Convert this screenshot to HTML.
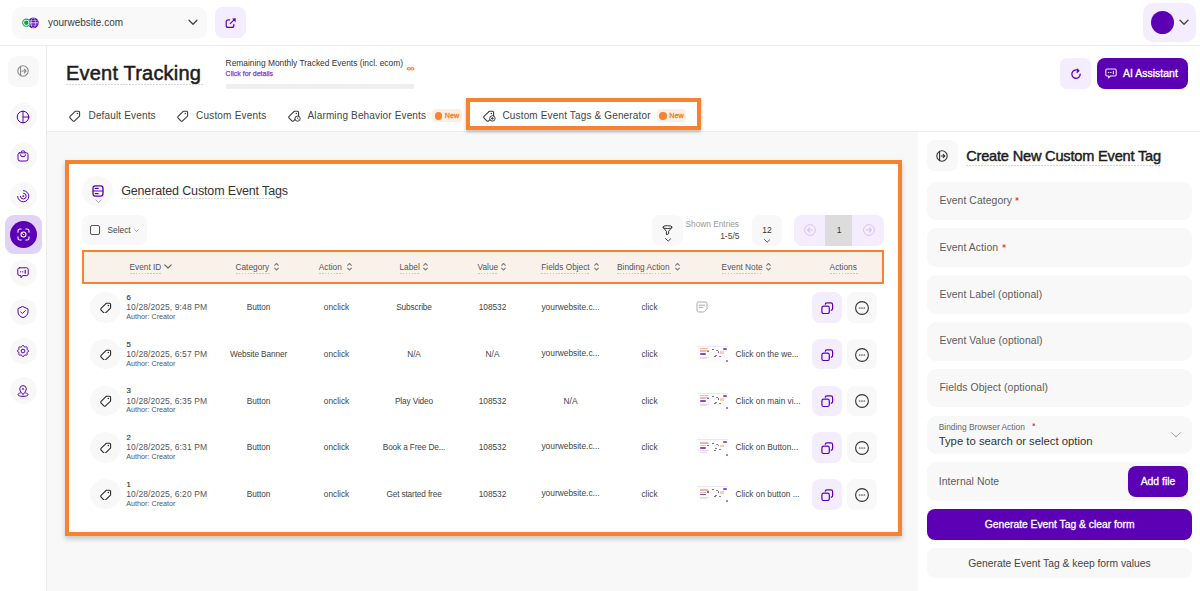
<!DOCTYPE html>
<html><head><meta charset="utf-8">
<style>
*{box-sizing:border-box;margin:0;padding:0}
html,body{width:1200px;height:591px;overflow:hidden}
body{position:relative;background:#fff;font-family:"Liberation Sans", sans-serif;color:#2b2b2b}
.t{position:absolute;white-space:nowrap}
.b{position:absolute}
svg{display:block}
</style></head>
<body>

<div class="b" style="left:0px;top:0px;width:1200px;height:45px;background:#fff;border-radius:0px;"></div>
<div class="b" style="left:0px;top:45px;width:1200px;height:1px;background:#ebebeb;border-radius:0px;"></div>
<div class="b" style="left:46px;top:46px;width:1px;height:545px;background:#ebebeb;border-radius:0px;"></div>
<div class="b" style="left:47px;top:131px;width:1153px;height:1px;background:#ededed;border-radius:0px;"></div>
<div class="b" style="left:47px;top:132px;width:871px;height:459px;background:#f8f8f8;border-radius:0px;"></div>
<div class="b" style="left:918px;top:132px;width:282px;height:459px;background:#fff;border-radius:0px;"></div>
<div class="b" style="left:12px;top:7px;width:195px;height:31.5px;background:#f9f9f9;border-radius:9px;"></div>
<svg class="b" style="left:21px;top:15px;" width="19" height="15" viewBox="0 0 19 15" fill="none"><circle cx="12.3" cy="7.85" r="5.4" fill="#5b00b5"/>
<path d="M8 5.6h8.6M8 10.1h8.6" stroke="#d9c6f5" stroke-width="0.6"/>
<path d="M7.6 7.85h9.4" stroke="#fff" stroke-width="0.9"/>
<ellipse cx="12.3" cy="7.85" rx="2.1" ry="4.9" stroke="#e6d9f8" stroke-width="0.7"/>
<circle cx="5.3" cy="7.7" r="4.3" fill="#fff"/>
<circle cx="5.3" cy="7.7" r="3.6" stroke="#22a65e" stroke-width="1.1"/>
<circle cx="5.3" cy="7.7" r="2.2" fill="#15a050"/></svg>
<div class="t" style="left:48px;top:15.50px;font-size:10px;line-height:14px;color:#3d3d3d;font-weight:400;letter-spacing:0px;">yourwebsite.com</div>
<svg class="b" style="left:188px;top:19px;" width="10" height="7" viewBox="0 0 10 7" fill="none"><path d="M1 1.2l4 4 4-4" stroke="#444" stroke-width="1.3" stroke-linecap="round" stroke-linejoin="round"/></svg>
<div class="b" style="left:215px;top:7px;width:31px;height:31px;background:#f3edfd;border-radius:8px;"></div>
<svg class="b" style="left:224.5px;top:17.5px;" width="11.5" height="10.5" viewBox="0 0 11.5 10.5" fill="none"><path d="M4.6 1.8H3.2A2 2 0 0 0 1.2 3.8v3.6a2 2 0 0 0 2 2h3.6a2 2 0 0 0 2-2V6.4" stroke="#5b00b5" stroke-width="1.2" stroke-linecap="round"/><path d="M5.2 5.6L10 .9" stroke="#5b00b5" stroke-width="1.2" stroke-linecap="round"/><path d="M7 .6h3.6v3.6z" fill="#5b00b5"/></svg>
<div class="b" style="left:1143px;top:3px;width:53px;height:39px;background:#f3edfd;border-radius:10px;"></div>
<div class="b" style="left:1150.5px;top:10.8px;width:23.5px;height:23.5px;background:#5b00b5;border-radius:12px;"></div>
<svg class="b" style="left:1179px;top:19px;" width="10" height="7" viewBox="0 0 10 7" fill="none"><path d="M1 1.2l4 4 4-4" stroke="#444" stroke-width="1.3" stroke-linecap="round" stroke-linejoin="round"/></svg>
<div class="b" style="left:7.5px;top:55.5px;width:31px;height:31.5px;background:#f8f8f8;border-radius:9px;"></div>
<svg class="b" style="left:17px;top:65px;" width="12" height="12" viewBox="0 0 12 12" fill="none"><circle cx="6" cy="6" r="5.2" stroke="#888" stroke-width="1.1"/><path d="M3.6 1.4v9.2M5 6h4M7.3 4.2L9 6 7.3 7.8" stroke="#888" stroke-width="1.1" stroke-linecap="round" stroke-linejoin="round"/></svg>
<div class="b" style="left:10px;top:103.4px;width:26.6px;height:26.6px;background:#f8f8f8;border-radius:14px;"></div>
<svg class="b" style="left:17.3px;top:110.7px;overflow:visible" width="12" height="12" viewBox="0 0 12 12" fill="none"><circle cx="6" cy="6" r="5.8" stroke="#5b00b5" stroke-width="1" stroke-linecap="round" stroke-linejoin="round"/><path d="M6 .2v11.6M6 6h5.8" stroke="#5b00b5" stroke-width="1" stroke-linecap="round" stroke-linejoin="round"/></svg>
<div class="b" style="left:10px;top:143.0px;width:26.6px;height:26.6px;background:#f8f8f8;border-radius:14px;"></div>
<svg class="b" style="left:17.3px;top:150.3px;overflow:visible" width="12" height="12" viewBox="0 0 12 12" fill="none"><path d="M4 2.8V2.4a2 1.6 0 0 1 4 0v.4" stroke="#5b00b5" stroke-width="1" stroke-linecap="round" stroke-linejoin="round"/><path d="M2.6 2.8h6.8a1.6 1.6 0 0 1 1.6 1.6v4.6a2 2 0 0 1-2 2H3a2 2 0 0 1-2-2V4.4a1.6 1.6 0 0 1 1.6-1.6z" stroke="#5b00b5" stroke-width="1" stroke-linecap="round" stroke-linejoin="round"/><path d="M3.4 4.8a2.6 2 0 0 0 5.2 0" stroke="#5b00b5" stroke-width="1" stroke-linecap="round" stroke-linejoin="round"/></svg>
<div class="b" style="left:10px;top:182.29999999999998px;width:26.6px;height:26.6px;background:#f8f8f8;border-radius:14px;"></div>
<svg class="b" style="left:17.3px;top:189.6px;overflow:visible" width="12" height="12" viewBox="0 0 12 12" fill="none"><path d="M6.5 .6a5.6 5.6 0 1 1-5.9 5.9" stroke="#5b00b5" stroke-width="1" stroke-linecap="round" stroke-linejoin="round"/><path d="M6.5 3.2a2.9 2.9 0 1 1-3.1 3.1" stroke="#5b00b5" stroke-width="1" stroke-linecap="round" stroke-linejoin="round"/><circle cx="6.3" cy="6.1" r=".9" fill="#5b00b5"/></svg>
<div class="b" style="left:5px;top:214.5px;width:37px;height:39px;background:#e2d2f6;border-radius:9px;"></div>
<div class="b" style="left:10px;top:220.5px;width:27px;height:27px;background:#5b00b5;border-radius:14px;"></div>
<svg class="b" style="left:17px;top:227.5px;" width="13" height="13" viewBox="0 0 13 13" fill="none"><path d="M1 4.2V2.8A1.8 1.8 0 0 1 2.8 1h1.4M8.8 1h1.4A1.8 1.8 0 0 1 12 2.8v1.4M12 8.8v1.4a1.8 1.8 0 0 1-1.8 1.8H8.8M4.2 12H2.8A1.8 1.8 0 0 1 1 10.2V8.8" stroke="#fff" stroke-width="1.1" stroke-linecap="round"/><circle cx="6.5" cy="6.5" r="2.5" stroke="#fff" stroke-width="1.1"/><path d="M5.6 5.7l1.1 1" stroke="#fff" stroke-width="1" stroke-linecap="round"/></svg>
<div class="b" style="left:10px;top:259.9px;width:26.6px;height:26.6px;background:#f8f8f8;border-radius:14px;"></div>
<svg class="b" style="left:17.3px;top:267.2px;overflow:visible" width="12" height="12" viewBox="0 0 12 12" fill="none"><path d="M2.4 .8h7.2a1.6 1.6 0 0 1 1.6 1.6v4.6a1.6 1.6 0 0 1-1.6 1.6H5.6L4 10.8V8.6H2.4A1.6 1.6 0 0 1 .8 7V2.4A1.6 1.6 0 0 1 2.4.8z" stroke="#5b00b5" stroke-width="1" stroke-linecap="round" stroke-linejoin="round"/><path d="M3.6 4.8h.2M5.6 4.8h.2M8.2 3.4v2.8" stroke="#5b00b5" stroke-width="1.2" stroke-linecap="round"/></svg>
<div class="b" style="left:10px;top:298.7px;width:26.6px;height:26.6px;background:#f8f8f8;border-radius:14px;"></div>
<svg class="b" style="left:17.3px;top:306px;overflow:visible" width="12" height="12" viewBox="0 0 12 12" fill="none"><path d="M6 .6l5 2.4v3c0 2.8-2.2 4.8-5 5.6C3.2 10.8 1 8.8 1 6V3z" stroke="#5b00b5" stroke-width="1" stroke-linecap="round" stroke-linejoin="round"/><path d="M3.8 6l1.6 1.5L8.3 4.7" stroke="#5b00b5" stroke-width="1" stroke-linecap="round" stroke-linejoin="round"/></svg>
<div class="b" style="left:10px;top:337.9px;width:26.6px;height:26.6px;background:#f8f8f8;border-radius:14px;"></div>
<svg class="b" style="left:17.3px;top:345.2px;overflow:visible" width="12" height="12" viewBox="0 0 12 12" fill="none"><g transform="translate(-1.44 -1.44) scale(.62)"><path d="M10.325 4.317c.426-1.756 2.924-1.756 3.35 0a1.724 1.724 0 0 0 2.573 1.066c1.543-.94 3.31.826 2.37 2.37a1.724 1.724 0 0 0 1.065 2.572c1.756.426 1.756 2.924 0 3.35a1.724 1.724 0 0 0-1.066 2.573c.94 1.543-.826 3.31-2.37 2.37a1.724 1.724 0 0 0-2.572 1.065c-.426 1.756-2.924 1.756-3.35 0a1.724 1.724 0 0 0-2.573-1.066c-1.543.94-3.31-.826-2.37-2.37a1.724 1.724 0 0 0-1.065-2.572c-1.756-.426-1.756-2.924 0-3.35a1.724 1.724 0 0 0 1.066-2.573c-.94-1.543.826-3.31 2.37-2.37c1 .608 2.296.07 2.572-1.065z" stroke="#5b00b5" stroke-width="1.6" stroke-linejoin="round"/><circle cx="12" cy="12" r="3" stroke="#5b00b5" stroke-width="1.6"/></g></svg>
<div class="b" style="left:10px;top:377.2px;width:26.6px;height:26.6px;background:#f8f8f8;border-radius:14px;"></div>
<svg class="b" style="left:17.3px;top:384.5px;overflow:visible" width="12" height="12" viewBox="0 0 12 12" fill="none"><path d="M6 9.4S2.7 6.6 2.7 3.9a3.3 3.3 0 0 1 6.6 0C9.3 6.6 6 9.4 6 9.4z" stroke="#5b00b5" stroke-width="1" stroke-linecap="round" stroke-linejoin="round"/><circle cx="6" cy="3.9" r=".9" fill="#5b00b5"/><path d="M3.4 7.9C1.9 8.3.9 8.9.9 9.6c0 1 2.3 1.8 5.1 1.8s5.1-.8 5.1-1.8c0-.7-1-1.3-2.5-1.7" stroke="#5b00b5" stroke-width="1" stroke-linecap="round" stroke-linejoin="round"/></svg>
<div class="t" style="left:66px;top:61.00px;font-size:20px;line-height:24px;color:#1c1c1c;font-weight:400;letter-spacing:0.2px;-webkit-text-stroke:0.5px #1c1c1c;">Event Tracking</div>
<div class="b" style="left:66px;top:84px;width:137px;height:1px;background:repeating-linear-gradient(90deg,#d6d6d6 0 1.6px,transparent 1.6px 3px)"></div>
<div class="t" style="left:225.6px;top:58.00px;font-size:8.4px;line-height:10px;color:#333;font-weight:400;letter-spacing:0px;">Remaining Monthly Tracked Events (incl. ecom)</div>
<div class="t" style="left:225.6px;top:68.50px;font-size:7px;line-height:10px;color:#7d3dd2;font-weight:400;letter-spacing:0px;-webkit-text-stroke:0.25px #7d3dd2;">Click for details</div>
<svg class="b" style="left:406px;top:65.5px;" width="9" height="5.5" viewBox="0 0 9 5.5" fill="none"><ellipse cx="2.85" cy="2.8" rx="1.65" ry="1.2" stroke="#f7822f" stroke-width="1.1"/><ellipse cx="6.35" cy="2.8" rx="1.65" ry="1.2" stroke="#f7822f" stroke-width="1.1"/></svg>
<div class="b" style="left:225.6px;top:84px;width:188.4px;height:5px;background:#efefef;border-radius:0px;"></div>
<svg class="b" style="left:69px;top:110px;" width="12" height="12" viewBox="0 0 12 12" fill="none"><path d="M6.3 1.2h3.1a1.2 1.2 0 0 1 1.2 1.2v3.1a1.2 1.2 0 0 1-.35.85L5.6 10.9a1.2 1.2 0 0 1-1.7 0L1.1 8.1a1.2 1.2 0 0 1 0-1.7l4.55-4.55a1.2 1.2 0 0 1 .65-.65z" stroke="#3a3a3a" stroke-width="1.1" stroke-linejoin="round"/><circle cx="8.3" cy="3.5" r=".75" fill="#3a3a3a"/></svg>
<div class="t" style="left:88.5px;top:108.50px;font-size:10px;line-height:14px;color:#444;font-weight:400;letter-spacing:0.16px;">Default Events</div>
<svg class="b" style="left:177px;top:110px;" width="12" height="12" viewBox="0 0 12 12" fill="none"><path d="M6.3 1.2h3.1a1.2 1.2 0 0 1 1.2 1.2v3.1a1.2 1.2 0 0 1-.35.85L5.6 10.9a1.2 1.2 0 0 1-1.7 0L1.1 8.1a1.2 1.2 0 0 1 0-1.7l4.55-4.55a1.2 1.2 0 0 1 .65-.65z" stroke="#3a3a3a" stroke-width="1.1" stroke-linejoin="round"/><circle cx="8.3" cy="3.5" r=".75" fill="#3a3a3a"/></svg>
<div class="t" style="left:196px;top:108.50px;font-size:10px;line-height:14px;color:#444;font-weight:400;letter-spacing:0.2px;">Custom Events</div>
<svg class="b" style="left:287.5px;top:109.5px;" width="13" height="12" viewBox="0 0 13 12" fill="none"><path d="M6.3 1.2h3.1a1.2 1.2 0 0 1 1.2 1.2v3.1a1.2 1.2 0 0 1-.35.85L5.6 10.9a1.2 1.2 0 0 1-1.7 0L1.1 8.1a1.2 1.2 0 0 1 0-1.7l4.55-4.55a1.2 1.2 0 0 1 .65-.65z" stroke="#3a3a3a" stroke-width="1.1" stroke-linejoin="round"/><circle cx="8.3" cy="3.5" r=".75" fill="#3a3a3a"/><circle cx="9.6" cy="8.6" r="2.6" fill="#fff" stroke="#3a3a3a" stroke-width="1"/><path d="M9.6 7.4v1.3l.8.6" stroke="#3a3a3a" stroke-width=".9"/></svg>
<div class="t" style="left:307.5px;top:108.50px;font-size:10px;line-height:14px;color:#444;font-weight:400;letter-spacing:0.15px;">Alarming Behavior Events</div>
<div class="b" style="left:432px;top:109.2px;width:29.5px;height:13.3px;background:#fdeee4;border-radius:4px;"></div>
<div class="b" style="left:434.7px;top:112.2px;width:7.4px;height:7.4px;background:#f7822f;border-radius:3.7px;"></div>
<div class="t" style="left:444.7px;top:111.00px;font-size:7.2px;line-height:10px;color:#f7822f;font-weight:400;letter-spacing:0px;-webkit-text-stroke:0.35px #f7822f;">New</div>
<div class="b" style="left:466px;top:98px;width:235px;height:32px;border:4px solid #f7822f;box-shadow:0 2px 3px rgba(0,0,0,.25)"></div>
<svg class="b" style="left:482.5px;top:109.5px;" width="13" height="12" viewBox="0 0 13 12" fill="none"><path d="M6.3 1.2h3.1a1.2 1.2 0 0 1 1.2 1.2v3.1a1.2 1.2 0 0 1-.35.85L5.6 10.9a1.2 1.2 0 0 1-1.7 0L1.1 8.1a1.2 1.2 0 0 1 0-1.7l4.55-4.55a1.2 1.2 0 0 1 .65-.65z" stroke="#3a3a3a" stroke-width="1.1" stroke-linejoin="round"/><circle cx="8.3" cy="3.5" r=".75" fill="#3a3a3a"/><circle cx="9.4" cy="8.4" r="2.7" fill="#fff" stroke="#3a3a3a" stroke-width="1"/><path d="M9.4 7v2.8M8 8.4h2.8" stroke="#3a3a3a" stroke-width=".9"/></svg>
<div class="t" style="left:502.5px;top:108.50px;font-size:10px;line-height:14px;color:#444;font-weight:400;letter-spacing:0.15px;">Custom Event Tags &amp; Generator</div>
<div class="b" style="left:656.5px;top:109.2px;width:29.5px;height:13.3px;background:#fdeee4;border-radius:4px;"></div>
<div class="b" style="left:659.2px;top:112.2px;width:7.4px;height:7.4px;background:#f7822f;border-radius:3.7px;"></div>
<div class="t" style="left:669.2px;top:111.00px;font-size:7.2px;line-height:10px;color:#f7822f;font-weight:400;letter-spacing:0px;-webkit-text-stroke:0.35px #f7822f;">New</div>
<div class="b" style="left:1060.3px;top:57.8px;width:30.8px;height:31px;background:#f3edfd;border-radius:7px;"></div>
<svg class="b" style="left:1069.5px;top:67.5px;" width="12" height="12" viewBox="0 0 12 12" fill="none"><path d="M10.2 6.2A4.2 4.2 0 1 1 8.4 2.7" stroke="#5b00b5" stroke-width="1.3" stroke-linecap="round"/><path d="M7.2 1.1l1.6 1.6-1.7 1.5" stroke="#5b00b5" stroke-width="1.3" stroke-linecap="round" stroke-linejoin="round"/></svg>
<div class="b" style="left:1096.5px;top:57.8px;width:91.5px;height:31px;background:#5b00b5;border-radius:8px;"></div>
<svg class="b" style="left:1104.5px;top:67.5px;" width="12" height="11" viewBox="0 0 12 11" fill="none"><path d="M2 1h8a1.2 1.2 0 0 1 1.2 1.2v4.6A1.2 1.2 0 0 1 10 8H5.4L3.6 9.8V8H2A1.2 1.2 0 0 1 .8 6.8V2.2A1.2 1.2 0 0 1 2 1z" stroke="#efe6fb" stroke-width="1.1" stroke-linejoin="round"/><path d="M3.4 4.5h.5M5.6 4.5h.5M8.4 3.2v2.6" stroke="#efe6fb" stroke-width="1.1" stroke-linecap="round"/></svg>
<div class="t" style="left:1123px;top:66.60px;font-size:10.4px;line-height:14px;color:#fff;font-weight:400;letter-spacing:0.05px;-webkit-text-stroke:0.35px #fff;">AI Assistant</div>
<div class="b" style="left:65px;top:160px;width:837px;height:376px;background:#fff;border:4px solid #f7822f;box-shadow:0 3px 5px rgba(0,0,0,.2)"></div>
<div class="b" style="left:82.3px;top:175.5px;width:30.3px;height:30.3px;background:#f8f8f8;border-radius:16px;"></div>
<svg class="b" style="left:92px;top:184.5px;" width="12" height="12" viewBox="0 0 12 12" fill="none"><rect x="1" y=".8" width="10" height="10.4" rx="2.4" stroke="#5b00b5" stroke-width="1.3"/><path d="M1.2 6h9.6M3.2 3.4h3M3.2 8.6h3" stroke="#5b00b5" stroke-width="1.1" stroke-linecap="round"/></svg>
<svg class="b" style="left:94.5px;top:198.5px;" width="7" height="5" viewBox="0 0 7 5" fill="none"><path d="M.8 1l2.7 2.6L6.2 1" stroke="#999" stroke-width=".9" stroke-linecap="round"/></svg>
<div class="t" style="left:121.2px;top:182.50px;font-size:12.5px;line-height:16px;color:#333;font-weight:400;letter-spacing:-0.15px;">Generated Custom Event Tags</div>
<div class="b" style="left:121px;top:198px;width:166px;height:1px;background:repeating-linear-gradient(90deg,#d6d6d6 0 1.6px,transparent 1.6px 3px)"></div>
<div class="b" style="left:82.3px;top:214.6px;width:65px;height:30.6px;background:#f8f8f8;border-radius:8px;"></div>
<div class="b" style="left:90px;top:225px;width:10px;height:10px;border:1.2px solid #555;border-radius:2px"></div>
<div class="t" style="left:107.6px;top:225.60px;font-size:8.2px;line-height:10px;color:#444;font-weight:400;letter-spacing:0.05px;">Select</div>
<svg class="b" style="left:133.5px;top:228.5px;" width="5" height="3" viewBox="0 0 5 3" fill="none"><path d="M.4.4L2.5 2.5 4.6.4" stroke="#777" stroke-width=".7"/></svg>
<div class="b" style="left:652px;top:214.5px;width:31px;height:31px;background:#f8f8f8;border-radius:8px;"></div>
<svg class="b" style="left:662px;top:224.5px;" width="11" height="10.5" viewBox="0 0 11 10.5" fill="none"><ellipse cx="5.5" cy="2.1" rx="4.6" ry="1.45" stroke="#333" stroke-width="1"/><path d="M.9 2.3L4.4 6.3v3.5l2.2-1V6.3l3.5-4" stroke="#333" stroke-width="1" stroke-linejoin="round"/></svg>
<svg class="b" style="left:664.5px;top:238px;" width="6.5" height="4" viewBox="0 0 6.5 4" fill="none"><path d="M.5.5L3.2 3.2 6 .5" stroke="#333" stroke-width=".9" stroke-linecap="round"/></svg>
<div class="t" style="left:685.5px;top:219.00px;font-size:8.3px;line-height:10px;color:#9a9a9a;font-weight:400;letter-spacing:0px;">Shown Entries</div>
<div class="t" style="left:699.50px;width:40px;text-align:right;top:231.00px;font-size:8.5px;line-height:10px;color:#444;font-weight:400;letter-spacing:0px;">1-5/5</div>
<div class="b" style="left:751.5px;top:214.75px;width:30.8px;height:30.9px;background:#f8f8f8;border-radius:8px;"></div>
<div class="t" style="left:757.00px;width:20px;text-align:center;top:224.80px;font-size:8.5px;line-height:10px;color:#333;font-weight:400;letter-spacing:0px;">12</div>
<svg class="b" style="left:763.8px;top:238.5px;" width="6.5" height="4" viewBox="0 0 6.5 4" fill="none"><path d="M.5.5L3.2 3.2 6 .5" stroke="#444" stroke-width=".9" stroke-linecap="round"/></svg>
<div class="b" style="left:794.4px;top:214.75px;width:89.4px;height:30.9px;background:#f3edfd;border-radius:8px;"></div>
<div class="b" style="left:825.4px;top:214.75px;width:27.1px;height:30.9px;background:#dcdcdc;border-radius:0px;"></div>
<div class="t" style="left:829.00px;width:20px;text-align:center;top:224.80px;font-size:8.5px;line-height:10px;color:#333;font-weight:400;letter-spacing:0px;">1</div>
<svg class="b" style="left:803.7px;top:223.6px;" width="12" height="12" viewBox="0 0 12 12" fill="none"><circle cx="6" cy="6" r="5.4" stroke="#d7c2f3" stroke-width="1"/><path d="M8.6 6H3.6M5.6 4L3.6 6l2 2" stroke="#d7c2f3" stroke-width="1.1" stroke-linecap="round" stroke-linejoin="round"/></svg>
<svg class="b" style="left:862.5px;top:223.6px;" width="12" height="12" viewBox="0 0 12 12" fill="none"><circle cx="6" cy="6" r="5.4" stroke="#d7c2f3" stroke-width="1"/><path d="M3.4 6h5M6.4 4l2 2-2 2" stroke="#d7c2f3" stroke-width="1.1" stroke-linecap="round" stroke-linejoin="round"/></svg>
<div class="b" style="left:82px;top:250px;width:802px;height:34px;background:#faf1eb;border:2.5px solid #f7822f"></div>
<div class="t" style="left:129.5px;top:262.00px;font-size:8.3px;line-height:10px;color:#555;font-weight:400;letter-spacing:0px;">Event ID</div>
<div class="b" style="left:129.5px;top:273px;width:31px;height:1px;background:repeating-linear-gradient(90deg,#cdc6c1 0 1.6px,transparent 1.6px 2.9px)"></div>
<svg class="b" style="left:163.5px;top:264px;" width="8" height="5" viewBox="0 0 8 5" fill="none"><path d="M.8.9l3.2 3.1L7.2.9" stroke="#666" stroke-width="1.2" stroke-linecap="round" stroke-linejoin="round"/></svg>
<div class="t" style="left:235.5px;top:262.00px;font-size:8.3px;line-height:10px;color:#555;font-weight:400;letter-spacing:0px;">Category</div>
<div class="b" style="left:235.5px;top:273px;width:34.5px;height:1px;background:repeating-linear-gradient(90deg,#cdc6c1 0 1.6px,transparent 1.6px 2.9px)"></div>
<svg class="b" style="left:273.5px;top:262.3px;" width="5" height="9.5" viewBox="0 0 5 9.5" fill="none"><path d="M.6 3.3L2.5 1.5 4.4 3.3M.6 6.2L2.5 8 4.4 6.2" stroke="#7a7a7a" stroke-width="1.05" stroke-linecap="round" stroke-linejoin="round"/></svg>
<div class="t" style="left:318.75px;top:262.00px;font-size:8.3px;line-height:10px;color:#555;font-weight:400;letter-spacing:0px;">Action</div>
<div class="b" style="left:318.75px;top:273px;width:24.25px;height:1px;background:repeating-linear-gradient(90deg,#cdc6c1 0 1.6px,transparent 1.6px 2.9px)"></div>
<svg class="b" style="left:346.5px;top:262.3px;" width="5" height="9.5" viewBox="0 0 5 9.5" fill="none"><path d="M.6 3.3L2.5 1.5 4.4 3.3M.6 6.2L2.5 8 4.4 6.2" stroke="#7a7a7a" stroke-width="1.05" stroke-linecap="round" stroke-linejoin="round"/></svg>
<div class="t" style="left:399.5px;top:262.00px;font-size:8.3px;line-height:10px;color:#555;font-weight:400;letter-spacing:0px;">Label</div>
<div class="b" style="left:399.5px;top:273px;width:20px;height:1px;background:repeating-linear-gradient(90deg,#cdc6c1 0 1.6px,transparent 1.6px 2.9px)"></div>
<svg class="b" style="left:423.0px;top:262.3px;" width="5" height="9.5" viewBox="0 0 5 9.5" fill="none"><path d="M.6 3.3L2.5 1.5 4.4 3.3M.6 6.2L2.5 8 4.4 6.2" stroke="#7a7a7a" stroke-width="1.05" stroke-linecap="round" stroke-linejoin="round"/></svg>
<div class="t" style="left:477.5px;top:262.00px;font-size:8.3px;line-height:10px;color:#555;font-weight:400;letter-spacing:0px;">Value</div>
<div class="b" style="left:477.5px;top:273px;width:20px;height:1px;background:repeating-linear-gradient(90deg,#cdc6c1 0 1.6px,transparent 1.6px 2.9px)"></div>
<svg class="b" style="left:501.0px;top:262.3px;" width="5" height="9.5" viewBox="0 0 5 9.5" fill="none"><path d="M.6 3.3L2.5 1.5 4.4 3.3M.6 6.2L2.5 8 4.4 6.2" stroke="#7a7a7a" stroke-width="1.05" stroke-linecap="round" stroke-linejoin="round"/></svg>
<div class="t" style="left:541.25px;top:262.00px;font-size:8.3px;line-height:10px;color:#555;font-weight:400;letter-spacing:0px;">Fields Object</div>
<div class="b" style="left:541.25px;top:273px;width:48.75px;height:1px;background:repeating-linear-gradient(90deg,#cdc6c1 0 1.6px,transparent 1.6px 2.9px)"></div>
<svg class="b" style="left:593.5px;top:262.3px;" width="5" height="9.5" viewBox="0 0 5 9.5" fill="none"><path d="M.6 3.3L2.5 1.5 4.4 3.3M.6 6.2L2.5 8 4.4 6.2" stroke="#7a7a7a" stroke-width="1.05" stroke-linecap="round" stroke-linejoin="round"/></svg>
<div class="t" style="left:617px;top:262.00px;font-size:8.3px;line-height:10px;color:#555;font-weight:400;letter-spacing:0px;">Binding Action</div>
<div class="b" style="left:617px;top:273px;width:54.25px;height:1px;background:repeating-linear-gradient(90deg,#cdc6c1 0 1.6px,transparent 1.6px 2.9px)"></div>
<svg class="b" style="left:674.75px;top:262.3px;" width="5" height="9.5" viewBox="0 0 5 9.5" fill="none"><path d="M.6 3.3L2.5 1.5 4.4 3.3M.6 6.2L2.5 8 4.4 6.2" stroke="#7a7a7a" stroke-width="1.05" stroke-linecap="round" stroke-linejoin="round"/></svg>
<div class="t" style="left:721.6px;top:262.00px;font-size:8.3px;line-height:10px;color:#555;font-weight:400;letter-spacing:0px;">Event Note</div>
<div class="b" style="left:721.6px;top:273px;width:40.4px;height:1px;background:repeating-linear-gradient(90deg,#cdc6c1 0 1.6px,transparent 1.6px 2.9px)"></div>
<svg class="b" style="left:765.5px;top:262.3px;" width="5" height="9.5" viewBox="0 0 5 9.5" fill="none"><path d="M.6 3.3L2.5 1.5 4.4 3.3M.6 6.2L2.5 8 4.4 6.2" stroke="#7a7a7a" stroke-width="1.05" stroke-linecap="round" stroke-linejoin="round"/></svg>
<div class="t" style="left:829.6px;top:262.00px;font-size:8.3px;line-height:10px;color:#555;font-weight:400;letter-spacing:0px;">Actions</div>
<div class="b" style="left:829.6px;top:273px;width:28px;height:1px;background:repeating-linear-gradient(90deg,#cdc6c1 0 1.6px,transparent 1.6px 2.9px)"></div>
<div class="b" style="left:90.1px;top:292.0px;width:30.6px;height:30.6px;background:#f8f8f8;border-radius:16px;"></div>
<svg class="b" style="left:99.5px;top:301.8px;" width="12" height="11.5" viewBox="0 0 12 11.5" fill="none"><path d="M6.3 1.2h3.1a1.2 1.2 0 0 1 1.2 1.2v3.1a1.2 1.2 0 0 1-.35.85L5.6 10.9a1.2 1.2 0 0 1-1.7 0L1.1 8.1a1.2 1.2 0 0 1 0-1.7l4.55-4.55a1.2 1.2 0 0 1 .65-.65z" stroke="#2a2a2a" stroke-width="1.1" stroke-linejoin="round"/><circle cx="8.3" cy="3.5" r=".75" fill="#2a2a2a"/></svg>
<div class="t" style="left:126.5px;top:292.90px;font-size:7.8px;line-height:9px;color:#333;font-weight:400;letter-spacing:0px;-webkit-text-stroke:0.15px #333;">6</div>
<div class="t" style="left:126.3px;top:302.00px;font-size:8.5px;line-height:10px;color:#555;font-weight:400;letter-spacing:0.1px;">10/28/2025, 9:48 PM</div>
<div class="t" style="left:126.3px;top:311.90px;font-size:7.2px;line-height:9px;color:#555;font-weight:400;letter-spacing:0px;">Author: Creator</div>
<div class="t" style="left:213.50px;width:90px;text-align:center;top:302.30px;font-size:8.3px;line-height:10px;color:#444;font-weight:400;letter-spacing:-0.12px;">Button</div>
<div class="t" style="left:306.50px;width:60px;text-align:center;top:302.30px;font-size:8.3px;line-height:10px;color:#444;font-weight:400;letter-spacing:0px;">onclick</div>
<div class="t" style="left:369.00px;width:90px;text-align:center;top:302.30px;font-size:8.3px;line-height:10px;color:#444;font-weight:400;letter-spacing:-0.15px;">Subscribe</div>
<div class="t" style="left:462.50px;width:60px;text-align:center;top:302.30px;font-size:8.3px;line-height:10px;color:#444;font-weight:400;letter-spacing:0px;">108532</div>
<div class="t" style="left:530.50px;width:80px;text-align:center;top:302.30px;font-size:8.4px;line-height:10px;color:#444;font-weight:400;letter-spacing:0px;">yourwebsite.c...</div>
<div class="t" style="left:629.50px;width:40px;text-align:center;top:302.30px;font-size:8.3px;line-height:10px;color:#444;font-weight:400;letter-spacing:0px;">click</div>
<svg class="b" style="left:696px;top:300.8px;" width="12" height="13" viewBox="0 0 12 13" fill="none"><path d="M2.6 1h6.8A1.6 1.6 0 0 1 11 2.6v5.2L7.8 11H2.6A1.6 1.6 0 0 1 1 9.4V2.6A1.6 1.6 0 0 1 2.6 1z" stroke="#aaa" stroke-width="1" stroke-linejoin="round"/><path d="M3.4 4.2h5.2M3.4 6.4h3.4" stroke="#aaa" stroke-width="1" stroke-linecap="round"/></svg>
<div class="b" style="left:811.8px;top:292.0px;width:30.6px;height:30.8px;background:#f3edfd;border-radius:8px;"></div>
<svg class="b" style="left:821px;top:301.8px;" width="12.5" height="12.5" viewBox="0 0 12.5 12.5" fill="none"><rect x=".9" y="4.1" width="7.4" height="7.4" rx="1.8" stroke="#5b00b5" stroke-width="1.2"/><path d="M4.2 2.6A1.8 1.8 0 0 1 6 .9h3.8a1.8 1.8 0 0 1 1.8 1.8v3.8a1.8 1.8 0 0 1-1.8 1.8" stroke="#5b00b5" stroke-width="1.2"/></svg>
<div class="b" style="left:846.9px;top:292.0px;width:30.6px;height:30.8px;background:#f8f8f8;border-radius:8px;"></div>
<svg class="b" style="left:855px;top:300.90000000000003px;" width="14" height="14" viewBox="0 0 14 14" fill="none"><circle cx="7" cy="7" r="6.4" stroke="#333" stroke-width="1.1"/><path d="M4.4 7h.6M6.7 7h.6M9 7h.6" stroke="#333" stroke-width="1.2" stroke-linecap="round"/></svg>
<div class="b" style="left:90.1px;top:338.7px;width:30.6px;height:30.6px;background:#f8f8f8;border-radius:16px;"></div>
<svg class="b" style="left:99.5px;top:348.5px;" width="12" height="11.5" viewBox="0 0 12 11.5" fill="none"><path d="M6.3 1.2h3.1a1.2 1.2 0 0 1 1.2 1.2v3.1a1.2 1.2 0 0 1-.35.85L5.6 10.9a1.2 1.2 0 0 1-1.7 0L1.1 8.1a1.2 1.2 0 0 1 0-1.7l4.55-4.55a1.2 1.2 0 0 1 .65-.65z" stroke="#2a2a2a" stroke-width="1.1" stroke-linejoin="round"/><circle cx="8.3" cy="3.5" r=".75" fill="#2a2a2a"/></svg>
<div class="t" style="left:126.5px;top:339.60px;font-size:7.8px;line-height:9px;color:#333;font-weight:400;letter-spacing:0px;-webkit-text-stroke:0.15px #333;">5</div>
<div class="t" style="left:126.3px;top:348.70px;font-size:8.5px;line-height:10px;color:#555;font-weight:400;letter-spacing:0.1px;">10/28/2025, 6:57 PM</div>
<div class="t" style="left:126.3px;top:358.60px;font-size:7.2px;line-height:9px;color:#555;font-weight:400;letter-spacing:0px;">Author: Creator</div>
<div class="t" style="left:213.50px;width:90px;text-align:center;top:349.00px;font-size:8.3px;line-height:10px;color:#444;font-weight:400;letter-spacing:-0.12px;">Website Banner</div>
<div class="t" style="left:306.50px;width:60px;text-align:center;top:349.00px;font-size:8.3px;line-height:10px;color:#444;font-weight:400;letter-spacing:0px;">onclick</div>
<div class="t" style="left:369.00px;width:90px;text-align:center;top:349.00px;font-size:8.3px;line-height:10px;color:#444;font-weight:400;letter-spacing:-0.15px;">N/A</div>
<div class="t" style="left:462.50px;width:60px;text-align:center;top:349.00px;font-size:8.3px;line-height:10px;color:#444;font-weight:400;letter-spacing:0px;">N/A</div>
<div class="t" style="left:530.50px;width:80px;text-align:center;top:348.00px;font-size:8.4px;line-height:10px;color:#444;font-weight:400;letter-spacing:0px;">yourwebsite.c...</div>
<div class="t" style="left:629.50px;width:40px;text-align:center;top:349.00px;font-size:8.3px;line-height:10px;color:#444;font-weight:400;letter-spacing:0px;">click</div>
<div class="b" style="left:697px;top:345.7px;width:30.5px;height:17px;background:#fdfcfe;overflow:hidden">
<div class="b" style="left:0;top:0;width:30.5px;height:1px;background:#efe7f8"></div>
<div class="b" style="left:3px;top:2.8px;width:8px;height:1px;background:#f0b9a0"></div>
<div class="b" style="left:3px;top:4.3px;width:9px;height:1px;background:#eeb49c"></div>
<div class="b" style="left:3px;top:5.8px;width:6px;height:1px;background:#f0bea8"></div>
<div class="b" style="left:9.5px;top:5.5px;width:2.5px;height:1.2px;background:#9a5fd8"></div>
<div class="b" style="left:3px;top:7.8px;width:5.5px;height:1.8px;border-radius:1px;background:#8446d6"></div>
<div class="b" style="left:3px;top:11px;width:9px;height:.8px;background:#e3dde8"></div>
<div class="b" style="left:3px;top:12.6px;width:7px;height:.8px;background:#e3dde8"></div>
<div class="b" style="left:25.5px;top:2px;width:4px;height:2px;border-radius:1px;background:#8a4fdc"></div>
<div class="b" style="left:15px;top:3.5px;width:1.6px;height:1px;background:#777"></div>
<div class="b" style="left:19px;top:4.5px;width:2px;height:1px;background:#888"></div>
<div class="b" style="left:20.5px;top:5.5px;width:1.8px;height:1.8px;border-radius:1px;background:#7f45d6"></div>
<div class="b" style="left:22.5px;top:5.5px;width:4px;height:2.5px;background:#f6cfae"></div>
<div class="b" style="left:18px;top:9px;width:1.5px;height:1px;background:#888"></div>
<div class="b" style="left:17px;top:10.5px;width:2px;height:1px;background:#777"></div>
<div class="b" style="left:22px;top:10px;width:2.2px;height:1px;background:#888"></div>
<div class="b" style="left:29px;top:14.5px;width:1.5px;height:2px;background:#b57ad0"></div>
</div>
<div class="t" style="left:735.5px;top:349.00px;font-size:8.3px;line-height:10px;color:#444;font-weight:400;letter-spacing:0px;">Click on the we...</div>
<div class="b" style="left:811.8px;top:338.7px;width:30.6px;height:30.8px;background:#f3edfd;border-radius:8px;"></div>
<svg class="b" style="left:821px;top:348.5px;" width="12.5" height="12.5" viewBox="0 0 12.5 12.5" fill="none"><rect x=".9" y="4.1" width="7.4" height="7.4" rx="1.8" stroke="#5b00b5" stroke-width="1.2"/><path d="M4.2 2.6A1.8 1.8 0 0 1 6 .9h3.8a1.8 1.8 0 0 1 1.8 1.8v3.8a1.8 1.8 0 0 1-1.8 1.8" stroke="#5b00b5" stroke-width="1.2"/></svg>
<div class="b" style="left:846.9px;top:338.7px;width:30.6px;height:30.8px;background:#f8f8f8;border-radius:8px;"></div>
<svg class="b" style="left:855px;top:347.6px;" width="14" height="14" viewBox="0 0 14 14" fill="none"><circle cx="7" cy="7" r="6.4" stroke="#333" stroke-width="1.1"/><path d="M4.4 7h.6M6.7 7h.6M9 7h.6" stroke="#333" stroke-width="1.2" stroke-linecap="round"/></svg>
<div class="b" style="left:90.1px;top:385.5px;width:30.6px;height:30.6px;background:#f8f8f8;border-radius:16px;"></div>
<svg class="b" style="left:99.5px;top:395.3px;" width="12" height="11.5" viewBox="0 0 12 11.5" fill="none"><path d="M6.3 1.2h3.1a1.2 1.2 0 0 1 1.2 1.2v3.1a1.2 1.2 0 0 1-.35.85L5.6 10.9a1.2 1.2 0 0 1-1.7 0L1.1 8.1a1.2 1.2 0 0 1 0-1.7l4.55-4.55a1.2 1.2 0 0 1 .65-.65z" stroke="#2a2a2a" stroke-width="1.1" stroke-linejoin="round"/><circle cx="8.3" cy="3.5" r=".75" fill="#2a2a2a"/></svg>
<div class="t" style="left:126.5px;top:386.40px;font-size:7.8px;line-height:9px;color:#333;font-weight:400;letter-spacing:0px;-webkit-text-stroke:0.15px #333;">3</div>
<div class="t" style="left:126.3px;top:395.50px;font-size:8.5px;line-height:10px;color:#555;font-weight:400;letter-spacing:0.1px;">10/28/2025, 6:35 PM</div>
<div class="t" style="left:126.3px;top:405.40px;font-size:7.2px;line-height:9px;color:#555;font-weight:400;letter-spacing:0px;">Author: Creator</div>
<div class="t" style="left:213.50px;width:90px;text-align:center;top:395.80px;font-size:8.3px;line-height:10px;color:#444;font-weight:400;letter-spacing:-0.12px;">Button</div>
<div class="t" style="left:306.50px;width:60px;text-align:center;top:395.80px;font-size:8.3px;line-height:10px;color:#444;font-weight:400;letter-spacing:0px;">onclick</div>
<div class="t" style="left:369.00px;width:90px;text-align:center;top:395.80px;font-size:8.3px;line-height:10px;color:#444;font-weight:400;letter-spacing:-0.15px;">Play Video</div>
<div class="t" style="left:462.50px;width:60px;text-align:center;top:395.80px;font-size:8.3px;line-height:10px;color:#444;font-weight:400;letter-spacing:0px;">108532</div>
<div class="t" style="left:530.50px;width:80px;text-align:center;top:395.80px;font-size:8.4px;line-height:10px;color:#444;font-weight:400;letter-spacing:0px;">N/A</div>
<div class="t" style="left:629.50px;width:40px;text-align:center;top:395.80px;font-size:8.3px;line-height:10px;color:#444;font-weight:400;letter-spacing:0px;">click</div>
<div class="b" style="left:697px;top:392.5px;width:30.5px;height:17px;background:#fdfcfe;overflow:hidden">
<div class="b" style="left:0;top:0;width:30.5px;height:1px;background:#efe7f8"></div>
<div class="b" style="left:3px;top:2.8px;width:8px;height:1px;background:#f0b9a0"></div>
<div class="b" style="left:3px;top:4.3px;width:9px;height:1px;background:#eeb49c"></div>
<div class="b" style="left:3px;top:5.8px;width:6px;height:1px;background:#f0bea8"></div>
<div class="b" style="left:9.5px;top:5.5px;width:2.5px;height:1.2px;background:#9a5fd8"></div>
<div class="b" style="left:3px;top:7.8px;width:5.5px;height:1.8px;border-radius:1px;background:#8446d6"></div>
<div class="b" style="left:3px;top:11px;width:9px;height:.8px;background:#e3dde8"></div>
<div class="b" style="left:3px;top:12.6px;width:7px;height:.8px;background:#e3dde8"></div>
<div class="b" style="left:25.5px;top:2px;width:4px;height:2px;border-radius:1px;background:#8a4fdc"></div>
<div class="b" style="left:15px;top:3.5px;width:1.6px;height:1px;background:#777"></div>
<div class="b" style="left:19px;top:4.5px;width:2px;height:1px;background:#888"></div>
<div class="b" style="left:20.5px;top:5.5px;width:1.8px;height:1.8px;border-radius:1px;background:#7f45d6"></div>
<div class="b" style="left:22.5px;top:5.5px;width:4px;height:2.5px;background:#f6cfae"></div>
<div class="b" style="left:18px;top:9px;width:1.5px;height:1px;background:#888"></div>
<div class="b" style="left:17px;top:10.5px;width:2px;height:1px;background:#777"></div>
<div class="b" style="left:22px;top:10px;width:2.2px;height:1px;background:#888"></div>
<div class="b" style="left:29px;top:14.5px;width:1.5px;height:2px;background:#b57ad0"></div>
</div>
<div class="t" style="left:735.5px;top:395.80px;font-size:8.3px;line-height:10px;color:#444;font-weight:400;letter-spacing:0px;">Click on main vi...</div>
<div class="b" style="left:811.8px;top:385.5px;width:30.6px;height:30.8px;background:#f3edfd;border-radius:8px;"></div>
<svg class="b" style="left:821px;top:395.3px;" width="12.5" height="12.5" viewBox="0 0 12.5 12.5" fill="none"><rect x=".9" y="4.1" width="7.4" height="7.4" rx="1.8" stroke="#5b00b5" stroke-width="1.2"/><path d="M4.2 2.6A1.8 1.8 0 0 1 6 .9h3.8a1.8 1.8 0 0 1 1.8 1.8v3.8a1.8 1.8 0 0 1-1.8 1.8" stroke="#5b00b5" stroke-width="1.2"/></svg>
<div class="b" style="left:846.9px;top:385.5px;width:30.6px;height:30.8px;background:#f8f8f8;border-radius:8px;"></div>
<svg class="b" style="left:855px;top:394.40000000000003px;" width="14" height="14" viewBox="0 0 14 14" fill="none"><circle cx="7" cy="7" r="6.4" stroke="#333" stroke-width="1.1"/><path d="M4.4 7h.6M6.7 7h.6M9 7h.6" stroke="#333" stroke-width="1.2" stroke-linecap="round"/></svg>
<div class="b" style="left:90.1px;top:432.09999999999997px;width:30.6px;height:30.6px;background:#f8f8f8;border-radius:16px;"></div>
<svg class="b" style="left:99.5px;top:441.9px;" width="12" height="11.5" viewBox="0 0 12 11.5" fill="none"><path d="M6.3 1.2h3.1a1.2 1.2 0 0 1 1.2 1.2v3.1a1.2 1.2 0 0 1-.35.85L5.6 10.9a1.2 1.2 0 0 1-1.7 0L1.1 8.1a1.2 1.2 0 0 1 0-1.7l4.55-4.55a1.2 1.2 0 0 1 .65-.65z" stroke="#2a2a2a" stroke-width="1.1" stroke-linejoin="round"/><circle cx="8.3" cy="3.5" r=".75" fill="#2a2a2a"/></svg>
<div class="t" style="left:126.5px;top:433.00px;font-size:7.8px;line-height:9px;color:#333;font-weight:400;letter-spacing:0px;-webkit-text-stroke:0.15px #333;">2</div>
<div class="t" style="left:126.3px;top:442.10px;font-size:8.5px;line-height:10px;color:#555;font-weight:400;letter-spacing:0.1px;">10/28/2025, 6:31 PM</div>
<div class="t" style="left:126.3px;top:452.00px;font-size:7.2px;line-height:9px;color:#555;font-weight:400;letter-spacing:0px;">Author: Creator</div>
<div class="t" style="left:213.50px;width:90px;text-align:center;top:442.40px;font-size:8.3px;line-height:10px;color:#444;font-weight:400;letter-spacing:-0.12px;">Button</div>
<div class="t" style="left:306.50px;width:60px;text-align:center;top:442.40px;font-size:8.3px;line-height:10px;color:#444;font-weight:400;letter-spacing:0px;">onclick</div>
<div class="t" style="left:369.00px;width:90px;text-align:center;top:442.40px;font-size:8.3px;line-height:10px;color:#444;font-weight:400;letter-spacing:-0.15px;">Book a Free De...</div>
<div class="t" style="left:462.50px;width:60px;text-align:center;top:442.40px;font-size:8.3px;line-height:10px;color:#444;font-weight:400;letter-spacing:0px;">108532</div>
<div class="t" style="left:530.50px;width:80px;text-align:center;top:441.40px;font-size:8.4px;line-height:10px;color:#444;font-weight:400;letter-spacing:0px;">yourwebsite.c...</div>
<div class="t" style="left:629.50px;width:40px;text-align:center;top:442.40px;font-size:8.3px;line-height:10px;color:#444;font-weight:400;letter-spacing:0px;">click</div>
<div class="b" style="left:697px;top:439.1px;width:30.5px;height:17px;background:#fdfcfe;overflow:hidden">
<div class="b" style="left:0;top:0;width:30.5px;height:1px;background:#efe7f8"></div>
<div class="b" style="left:3px;top:2.8px;width:8px;height:1px;background:#f0b9a0"></div>
<div class="b" style="left:3px;top:4.3px;width:9px;height:1px;background:#eeb49c"></div>
<div class="b" style="left:3px;top:5.8px;width:6px;height:1px;background:#f0bea8"></div>
<div class="b" style="left:9.5px;top:5.5px;width:2.5px;height:1.2px;background:#9a5fd8"></div>
<div class="b" style="left:3px;top:7.8px;width:5.5px;height:1.8px;border-radius:1px;background:#8446d6"></div>
<div class="b" style="left:3px;top:11px;width:9px;height:.8px;background:#e3dde8"></div>
<div class="b" style="left:3px;top:12.6px;width:7px;height:.8px;background:#e3dde8"></div>
<div class="b" style="left:25.5px;top:2px;width:4px;height:2px;border-radius:1px;background:#8a4fdc"></div>
<div class="b" style="left:15px;top:3.5px;width:1.6px;height:1px;background:#777"></div>
<div class="b" style="left:19px;top:4.5px;width:2px;height:1px;background:#888"></div>
<div class="b" style="left:20.5px;top:5.5px;width:1.8px;height:1.8px;border-radius:1px;background:#7f45d6"></div>
<div class="b" style="left:22.5px;top:5.5px;width:4px;height:2.5px;background:#f6cfae"></div>
<div class="b" style="left:18px;top:9px;width:1.5px;height:1px;background:#888"></div>
<div class="b" style="left:17px;top:10.5px;width:2px;height:1px;background:#777"></div>
<div class="b" style="left:22px;top:10px;width:2.2px;height:1px;background:#888"></div>
<div class="b" style="left:29px;top:14.5px;width:1.5px;height:2px;background:#b57ad0"></div>
</div>
<div class="t" style="left:735.5px;top:442.40px;font-size:8.3px;line-height:10px;color:#444;font-weight:400;letter-spacing:0px;">Click on Button...</div>
<div class="b" style="left:811.8px;top:432.09999999999997px;width:30.6px;height:30.8px;background:#f3edfd;border-radius:8px;"></div>
<svg class="b" style="left:821px;top:441.9px;" width="12.5" height="12.5" viewBox="0 0 12.5 12.5" fill="none"><rect x=".9" y="4.1" width="7.4" height="7.4" rx="1.8" stroke="#5b00b5" stroke-width="1.2"/><path d="M4.2 2.6A1.8 1.8 0 0 1 6 .9h3.8a1.8 1.8 0 0 1 1.8 1.8v3.8a1.8 1.8 0 0 1-1.8 1.8" stroke="#5b00b5" stroke-width="1.2"/></svg>
<div class="b" style="left:846.9px;top:432.09999999999997px;width:30.6px;height:30.8px;background:#f8f8f8;border-radius:8px;"></div>
<svg class="b" style="left:855px;top:441.0px;" width="14" height="14" viewBox="0 0 14 14" fill="none"><circle cx="7" cy="7" r="6.4" stroke="#333" stroke-width="1.1"/><path d="M4.4 7h.6M6.7 7h.6M9 7h.6" stroke="#333" stroke-width="1.2" stroke-linecap="round"/></svg>
<div class="b" style="left:90.1px;top:478.9px;width:30.6px;height:30.6px;background:#f8f8f8;border-radius:16px;"></div>
<svg class="b" style="left:99.5px;top:488.7px;" width="12" height="11.5" viewBox="0 0 12 11.5" fill="none"><path d="M6.3 1.2h3.1a1.2 1.2 0 0 1 1.2 1.2v3.1a1.2 1.2 0 0 1-.35.85L5.6 10.9a1.2 1.2 0 0 1-1.7 0L1.1 8.1a1.2 1.2 0 0 1 0-1.7l4.55-4.55a1.2 1.2 0 0 1 .65-.65z" stroke="#2a2a2a" stroke-width="1.1" stroke-linejoin="round"/><circle cx="8.3" cy="3.5" r=".75" fill="#2a2a2a"/></svg>
<div class="t" style="left:126.5px;top:479.80px;font-size:7.8px;line-height:9px;color:#333;font-weight:400;letter-spacing:0px;-webkit-text-stroke:0.15px #333;">1</div>
<div class="t" style="left:126.3px;top:488.90px;font-size:8.5px;line-height:10px;color:#555;font-weight:400;letter-spacing:0.1px;">10/28/2025, 6:20 PM</div>
<div class="t" style="left:126.3px;top:498.80px;font-size:7.2px;line-height:9px;color:#555;font-weight:400;letter-spacing:0px;">Author: Creator</div>
<div class="t" style="left:213.50px;width:90px;text-align:center;top:489.20px;font-size:8.3px;line-height:10px;color:#444;font-weight:400;letter-spacing:-0.12px;">Button</div>
<div class="t" style="left:306.50px;width:60px;text-align:center;top:489.20px;font-size:8.3px;line-height:10px;color:#444;font-weight:400;letter-spacing:0px;">onclick</div>
<div class="t" style="left:369.00px;width:90px;text-align:center;top:489.20px;font-size:8.3px;line-height:10px;color:#444;font-weight:400;letter-spacing:-0.15px;">Get started free</div>
<div class="t" style="left:462.50px;width:60px;text-align:center;top:489.20px;font-size:8.3px;line-height:10px;color:#444;font-weight:400;letter-spacing:0px;">108532</div>
<div class="t" style="left:530.50px;width:80px;text-align:center;top:488.20px;font-size:8.4px;line-height:10px;color:#444;font-weight:400;letter-spacing:0px;">yourwebsite.c...</div>
<div class="t" style="left:629.50px;width:40px;text-align:center;top:489.20px;font-size:8.3px;line-height:10px;color:#444;font-weight:400;letter-spacing:0px;">click</div>
<div class="b" style="left:697px;top:485.9px;width:30.5px;height:17px;background:#fdfcfe;overflow:hidden">
<div class="b" style="left:0;top:0;width:30.5px;height:1px;background:#efe7f8"></div>
<div class="b" style="left:3px;top:2.8px;width:8px;height:1px;background:#f0b9a0"></div>
<div class="b" style="left:3px;top:4.3px;width:9px;height:1px;background:#eeb49c"></div>
<div class="b" style="left:3px;top:5.8px;width:6px;height:1px;background:#f0bea8"></div>
<div class="b" style="left:9.5px;top:5.5px;width:2.5px;height:1.2px;background:#9a5fd8"></div>
<div class="b" style="left:3px;top:7.8px;width:5.5px;height:1.8px;border-radius:1px;background:#8446d6"></div>
<div class="b" style="left:3px;top:11px;width:9px;height:.8px;background:#e3dde8"></div>
<div class="b" style="left:3px;top:12.6px;width:7px;height:.8px;background:#e3dde8"></div>
<div class="b" style="left:25.5px;top:2px;width:4px;height:2px;border-radius:1px;background:#8a4fdc"></div>
<div class="b" style="left:15px;top:3.5px;width:1.6px;height:1px;background:#777"></div>
<div class="b" style="left:19px;top:4.5px;width:2px;height:1px;background:#888"></div>
<div class="b" style="left:20.5px;top:5.5px;width:1.8px;height:1.8px;border-radius:1px;background:#7f45d6"></div>
<div class="b" style="left:22.5px;top:5.5px;width:4px;height:2.5px;background:#f6cfae"></div>
<div class="b" style="left:18px;top:9px;width:1.5px;height:1px;background:#888"></div>
<div class="b" style="left:17px;top:10.5px;width:2px;height:1px;background:#777"></div>
<div class="b" style="left:22px;top:10px;width:2.2px;height:1px;background:#888"></div>
<div class="b" style="left:29px;top:14.5px;width:1.5px;height:2px;background:#b57ad0"></div>
</div>
<div class="t" style="left:735.5px;top:489.20px;font-size:8.3px;line-height:10px;color:#444;font-weight:400;letter-spacing:0px;">Click on button ...</div>
<div class="b" style="left:811.8px;top:478.9px;width:30.6px;height:30.8px;background:#f3edfd;border-radius:8px;"></div>
<svg class="b" style="left:821px;top:488.7px;" width="12.5" height="12.5" viewBox="0 0 12.5 12.5" fill="none"><rect x=".9" y="4.1" width="7.4" height="7.4" rx="1.8" stroke="#5b00b5" stroke-width="1.2"/><path d="M4.2 2.6A1.8 1.8 0 0 1 6 .9h3.8a1.8 1.8 0 0 1 1.8 1.8v3.8a1.8 1.8 0 0 1-1.8 1.8" stroke="#5b00b5" stroke-width="1.2"/></svg>
<div class="b" style="left:846.9px;top:478.9px;width:30.6px;height:30.8px;background:#f8f8f8;border-radius:8px;"></div>
<svg class="b" style="left:855px;top:487.8px;" width="14" height="14" viewBox="0 0 14 14" fill="none"><circle cx="7" cy="7" r="6.4" stroke="#333" stroke-width="1.1"/><path d="M4.4 7h.6M6.7 7h.6M9 7h.6" stroke="#333" stroke-width="1.2" stroke-linecap="round"/></svg>
<div class="b" style="left:927px;top:140.1px;width:30.8px;height:31.1px;background:#f8f8f8;border-radius:8px;"></div>
<svg class="b" style="left:936px;top:150px;" width="12" height="12" viewBox="0 0 12 12" fill="none"><circle cx="6" cy="6" r="5.2" stroke="#333" stroke-width="1.1"/><path d="M3.6 1.4v9.2M5.2 6h3.4M7.2 4.4L8.8 6 7.2 7.6" stroke="#333" stroke-width="1.1" stroke-linecap="round" stroke-linejoin="round"/></svg>
<div class="t" style="left:966.2px;top:146.60px;font-size:14.6px;line-height:18px;color:#1c1c1c;font-weight:400;letter-spacing:-0.2px;-webkit-text-stroke:0.45px #1c1c1c;">Create New Custom Event Tag</div>
<div class="b" style="left:966px;top:165px;width:195px;height:1px;background:repeating-linear-gradient(90deg,#d6d6d6 0 1.6px,transparent 1.6px 3px)"></div>
<div class="b" style="left:927px;top:181.6px;width:265px;height:38.5px;background:#f8f8f8;border-radius:9px;"></div>
<div class="t" style="left:939.4px;top:194.00px;font-size:10.4px;line-height:14px;color:#5c5c5c;font-weight:400;letter-spacing:0.08px;">Event Category</div>
<div class="b" style="left:927px;top:228.4px;width:265px;height:38.5px;background:#f8f8f8;border-radius:9px;"></div>
<div class="t" style="left:939.4px;top:240.80px;font-size:10.4px;line-height:14px;color:#5c5c5c;font-weight:400;letter-spacing:0.08px;">Event Action</div>
<div class="b" style="left:927px;top:275.2px;width:265px;height:38.5px;background:#f8f8f8;border-radius:9px;"></div>
<div class="t" style="left:939.4px;top:287.60px;font-size:10.4px;line-height:14px;color:#5c5c5c;font-weight:400;letter-spacing:0.08px;">Event Label (optional)</div>
<div class="b" style="left:927px;top:322px;width:265px;height:38.5px;background:#f8f8f8;border-radius:9px;"></div>
<div class="t" style="left:939.4px;top:334.40px;font-size:10.4px;line-height:14px;color:#5c5c5c;font-weight:400;letter-spacing:0.08px;">Event Value (optional)</div>
<div class="b" style="left:927px;top:368.6px;width:265px;height:38.5px;background:#f8f8f8;border-radius:9px;"></div>
<div class="t" style="left:939.4px;top:381.00px;font-size:10.4px;line-height:14px;color:#5c5c5c;font-weight:400;letter-spacing:0.08px;">Fields Object (optional)</div>
<svg class="b" style="left:1015px;top:197px;" width="4" height="4" viewBox="0 0 4 4" fill="none"><path d="M2 .3v3.4M.5 1.15l3 1.7M.5 2.85l3-1.7" stroke="#e5342b" stroke-width="0.9"/></svg>
<svg class="b" style="left:1001.7px;top:244px;" width="4" height="4" viewBox="0 0 4 4" fill="none"><path d="M2 .3v3.4M.5 1.15l3 1.7M.5 2.85l3-1.7" stroke="#e5342b" stroke-width="0.9"/></svg>
<div class="b" style="left:927px;top:415.5px;width:265px;height:38.5px;background:#f8f8f8;border-radius:9px;"></div>
<div class="t" style="left:938.7px;top:421.80px;font-size:8.4px;line-height:10px;color:#666;font-weight:400;letter-spacing:0px;">Binding Browser Action</div>
<svg class="b" style="left:1031.5px;top:422.5px;" width="3.5" height="3.5" viewBox="0 0 4 4" fill="none"><path d="M2 .3v3.4M.5 1.15l3 1.7M.5 2.85l3-1.7" stroke="#e5342b" stroke-width="0.9"/></svg>
<div class="t" style="left:938.7px;top:434.00px;font-size:11.3px;line-height:14px;color:#333;font-weight:400;letter-spacing:0px;">Type to search or select option</div>
<svg class="b" style="left:1171px;top:431.5px;" width="10" height="6" viewBox="0 0 10 6" fill="none"><path d="M.8.8l4.2 4 4.2-4" stroke="#999" stroke-width="1" stroke-linecap="round"/></svg>
<div class="b" style="left:927px;top:462.4px;width:265px;height:38.3px;background:#f8f8f8;border-radius:9px;"></div>
<div class="t" style="left:938.7px;top:475.00px;font-size:10.4px;line-height:14px;color:#5c5c5c;font-weight:400;letter-spacing:0.08px;">Internal Note</div>
<div class="b" style="left:1128.4px;top:466px;width:59.2px;height:31px;background:#5b00b5;border-radius:8px;"></div>
<div class="t" style="left:1128.00px;width:60px;text-align:center;top:475.60px;font-size:10.4px;line-height:12px;color:#fff;font-weight:400;letter-spacing:0px;-webkit-text-stroke:0.3px #fff;">Add file</div>
<div class="b" style="left:927px;top:508.5px;width:265px;height:31.3px;background:#5b00b5;border-radius:8px;"></div>
<div class="t" style="left:929.70px;width:260px;text-align:center;top:517.80px;font-size:10.3px;line-height:14px;color:#fff;font-weight:400;letter-spacing:0px;-webkit-text-stroke:0.3px #fff;">Generate Event Tag &amp; clear form</div>
<div class="b" style="left:927px;top:547.6px;width:265px;height:30.6px;background:#f8f8f8;border-radius:8px;"></div>
<div class="t" style="left:929.50px;width:260px;text-align:center;top:557.00px;font-size:10.3px;line-height:14px;color:#444;font-weight:400;letter-spacing:0px;">Generate Event Tag &amp; keep form values</div>
</body></html>
